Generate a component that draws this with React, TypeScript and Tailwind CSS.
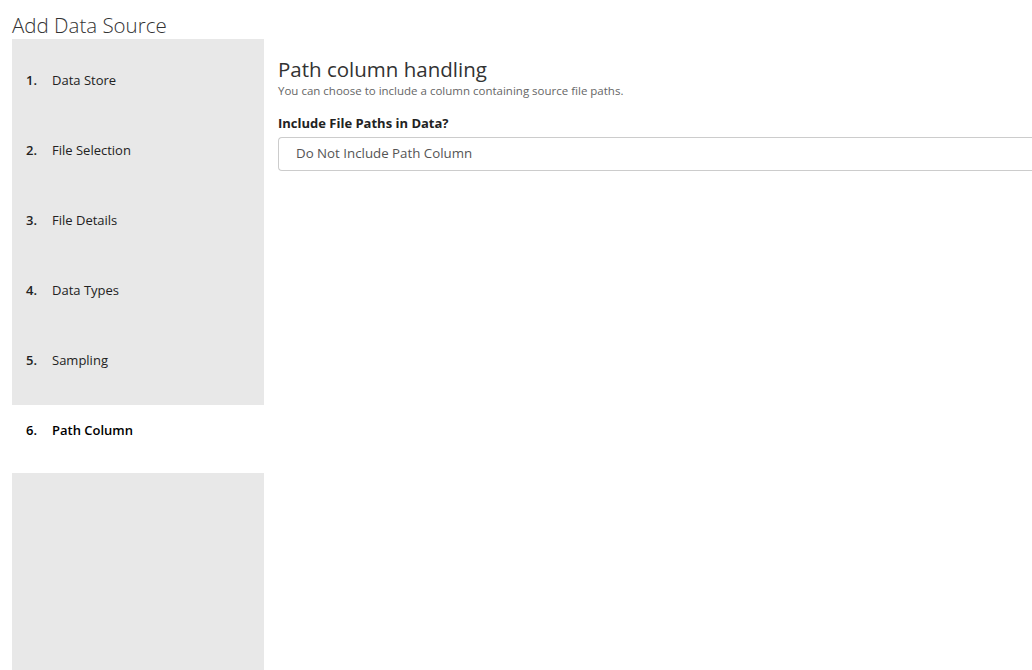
import React from "react";

const steps = [
  "Data Store",
  "File Selection",
  "File Details",
  "Data Types",
  "Sampling",
  "Path Column",
];

export default function App() {
  const active = 5;
  return (
    <div
      className="w-[1032px] h-[670px] overflow-hidden bg-white text-[#333]"
      style={{ fontFamily: '"Open Sans", "Noto Sans", sans-serif' }}
    >
      <div className="pl-[12px] pt-[12px] h-[39px] text-[20.5px] leading-[26px] font-light text-[#333]">
        Add Data Source
      </div>
      <div className="flex">
        <div className="w-[252px] h-[631px] ml-[12px] bg-[#e8e8e8] pt-[16px] flex flex-col">
          {steps.map((s, i) => (
            <div
              key={s}
              className={`pt-[16px] pl-[14px] flex items-start text-[13px] leading-[18px] ${
                i === active ? "h-[68px] bg-white font-semibold text-black" : "h-[70px] text-[#222]"
              }`}
            >
              <span className="w-[26px] font-semibold">{i + 1}.</span>
              <span>{s}</span>
            </div>
          ))}
        </div>
        <div className="flex-1 pl-[14px] pt-[17px]">
          <div className="text-[20.5px] leading-[26px] text-[#333]">Path column handling</div>
          <div className="text-[11.5px] leading-[16px] text-[#666] mt-[1px]">
            You can choose to include a column containing source file paths.
          </div>
          <div className="text-[13px] leading-[18px] font-bold text-[#222] mt-[15px]">
            Include File Paths in Data?
          </div>
          <div className="mt-[5px] h-[34px] border border-[#ccc] border-r-0 rounded-l-[4px] flex items-center pl-[17px] text-[13.3px] text-[#555]">
            Do Not Include Path Column
          </div>
        </div>
      </div>
    </div>
  );
}
